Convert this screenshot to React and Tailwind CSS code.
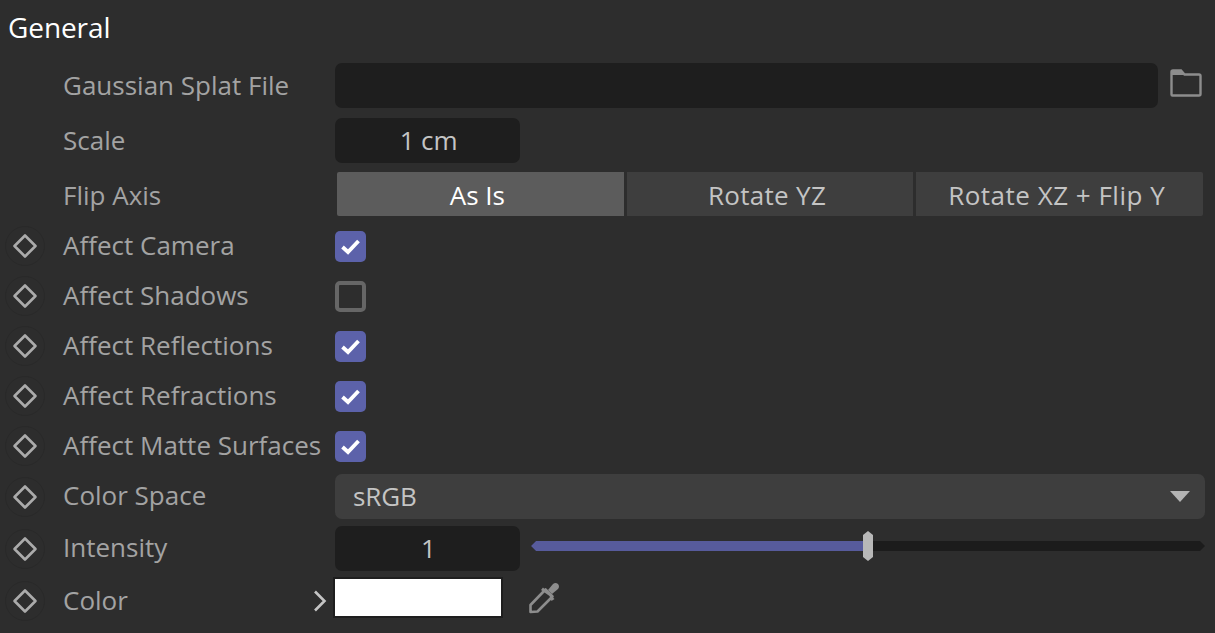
const labelFont = { fontFamily: '"Open Sans", "Noto Sans", sans-serif' };

function KeyDot() {
    return (
        <div className="flex h-10 w-10 shrink-0 items-center justify-center rounded-full border border-[#292929]">
            <svg width="26" height="26" viewBox="0 0 26 26" fill="none">
                <path d="M13 2.5 L23.5 13 L13 23.5 L2.5 13 Z" stroke="#ababab" strokeWidth="2.6" strokeLinejoin="round" />
            </svg>
        </div>
    );
}

function Row({ label, keyed, children, className, labelClass = "" }) {
    return (
        <div className={"flex items-center " + className}>
            <div className="flex w-[63px] shrink-0 pl-[5px]">{keyed && <KeyDot />}</div>
            <div className={"w-[272px] shrink-0 whitespace-nowrap text-[26px] text-[#a3a3a3] " + (keyed ? "-mt-[2px] " : "") + labelClass}>{label}</div>
            <div className="flex min-w-0 flex-1 items-center">{children}</div>
        </div>
    );
}

function Check({ on }) {
    if (!on) {
        return <div className="h-[31px] w-[31px] rounded-[5px] border-4 border-[#666666]" />;
    }
    return (
        <div className="flex h-[31px] w-[31px] items-center justify-center rounded-[5px] bg-[#5c62aa]">
            <svg width="23" height="23" viewBox="0 0 23 23" fill="none">
                <path d="M3.5 12 L9 17 L19.5 6" stroke="#ffffff" strokeWidth="3.8" />
            </svg>
        </div>
    );
}

function NumField({ value }) {
    return (
        <div className="flex h-[45px] w-[185px] shrink-0 items-center justify-center rounded-[7px] bg-[#1e1e1e] pl-[2px] text-[26px] tracking-[-0.1px] text-[#c4c4c4]">
            {value}
        </div>
    );
}

export default function App() {
    const toggles = [
        ["Affect Camera", true],
        ["Affect Shadows", false],
        ["Affect Reflections", true],
        ["Affect Refractions", true],
        ["Affect Matte Surfaces", true],
    ];

    return (
        <div className="h-[633px] w-[1215px] overflow-hidden bg-[#2d2d2d]" style={labelFont}>
            <div className="flex h-[55px] items-center pb-[2px] pl-[8px] text-[28px] tracking-[-0.1px] text-white">General</div>

            <Row label="Gaussian Splat File" className="mt-[8px] h-[45px]">
                <div className="h-[45px] w-[823px] rounded-[7px] bg-[#1e1e1e]" />
                <svg className="mb-[6px] ml-[12px]" width="32" height="28" viewBox="0 0 32 28" fill="none">
                    <path d="M1.5 25.5 V3 Q1.5 1.5 3 1.5 H11 L14.5 5.5 H29 Q30.5 5.5 30.5 7 V25 Q30.5 26.5 29 26.5 H2.5 Q1.5 26.5 1.5 25.5 Z" stroke="#8d8d8d" strokeWidth="2.4" />
                    <path d="M2 2 H11 L14.5 6 H2 Z" fill="#8d8d8d" />
                </svg>
            </Row>

            <Row label="Scale" className="mt-[10px] h-[45px]">
                <NumField value="1 cm" />
            </Row>

            <Row label="Flip Axis" labelClass="pt-[2px]" className="mt-[9px] h-[44px]">
                <div className="ml-[2px] flex h-[44px] w-[866px] gap-[3px] text-[26px]">
                    <div className="flex flex-1 items-center justify-center rounded-l-[2px] bg-[#5c5c5c] pr-[6px] pt-[2px] text-white">As Is</div>
                    <div className="flex flex-1 items-center justify-center bg-[#3e3e3e] pr-[6px] pt-[2px] tracking-[0.3px] text-[#c4c4c4]">Rotate YZ</div>
                    <div className="flex flex-1 items-center justify-center rounded-r-[2px] bg-[#3e3e3e] pr-[6px] pt-[2px] tracking-[0.5px] text-[#c4c4c4]">Rotate XZ + Flip Y</div>
                </div>
            </Row>

            <div className="mt-[5px] flex flex-col">
                {toggles.map(([label, on]) => (
                    <Row key={label} label={label} keyed className="h-[50px]">
                        <Check on={on} />
                    </Row>
                ))}
            </div>

            <Row label="Color Space" keyed className="mt-[3px] h-[45px]">
                <div className="flex h-[45px] w-[870px] items-center justify-between rounded-[7px] bg-[#3e3e3e] pl-[18px] pr-[15px] text-[26px] tracking-[-0.1px] text-[#c4c4c4]">
                    <span>sRGB</span>
                    <svg width="20" height="11" viewBox="0 0 20 11">
                        <path d="M0 0 H20 L10 11 Z" fill="#b4b4b4" />
                    </svg>
                </div>
            </Row>

            <Row label="Intensity" keyed className="mt-[7px] h-[45px]">
                <NumField value="1" />
                <div className="relative mb-[5px] ml-[11px] h-[10px] w-[674px]">
                    <div className="flex h-full w-full bg-[#1c1c1c] [clip-path:polygon(5px_0,calc(100%-5px)_0,100%_50%,calc(100%-5px)_100%,5px_100%,0_50%)]">
                        <div className="h-full w-[334px] bg-[#575b9c]" />
                    </div>
                    <div className="absolute left-[332px] top-[-10px] h-[30px] w-[10px] bg-[#b8b8b8] [clip-path:polygon(50%_0,100%_4px,100%_calc(100%-4px),50%_100%,0_calc(100%-4px),0_4px)]" />
                </div>
            </Row>

            <Row label="Color" keyed className="mt-[7px] h-[46px]">
                <div className="-ml-[23px] mr-[6px] flex w-[15px] justify-center">
                    <svg width="14" height="22" viewBox="0 0 14 22" fill="none">
                        <path d="M2 1.5 L11.5 11 L2 20.5" stroke="#c4c4c4" strokeWidth="2.6" />
                    </svg>
                </div>
                <div className="mb-[7px] h-[41px] w-[170px] border-2 border-[#1e1e1e] bg-white" />
                <svg className="mb-[7px] ml-[24px]" width="34" height="34" viewBox="0 0 34 34" fill="none">
                    <path d="M18.5 8.5 L25.5 15.5 L10.5 30.5 L3.5 31 L3.5 24 Z" stroke="#8d8d8d" strokeWidth="2.6" strokeLinejoin="round" />
                    <path d="M16 6.5 L27.5 18 L24.5 20 L22.5 15 L14 9 Z" fill="#8d8d8d" />
                    <path d="M21 9 L26 3 Q28.5 1 31 3 Q33 5.5 31 8 L25 13 Z" fill="#8d8d8d" />
                </svg>
            </Row>
        </div>
    );
}
